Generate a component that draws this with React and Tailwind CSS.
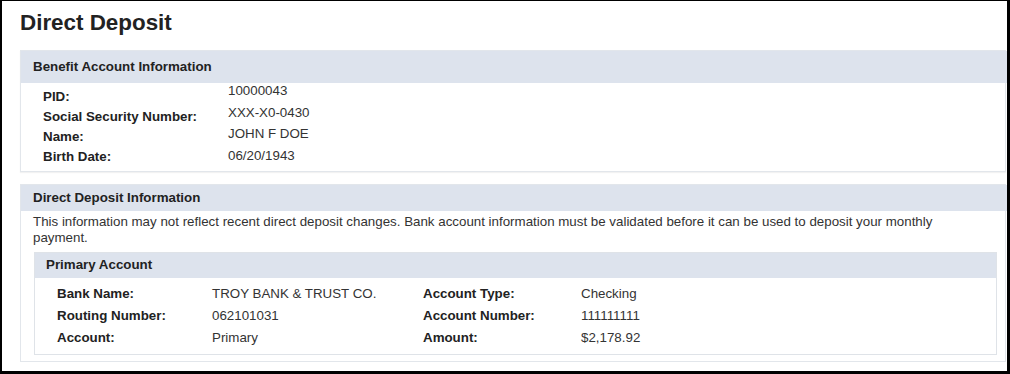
export default function App() {
  const benefit = [
    ['PID:', '10000043'],
    ['Social Security Number:', 'XXX-X0-0430'],
    ['Name:', 'JOHN F DOE'],
    ['Birth Date:', '06/20/1943'],
  ];
  const primary = [
    ['Bank Name:', 'TROY BANK & TRUST CO.', 'Account Type:', 'Checking'],
    ['Routing Number:', '062101031', 'Account Number:', '111111111'],
    ['Account:', 'Primary', 'Amount:', '$2,178.92'],
  ];

  return (
    <div
      className="w-[1010px] h-[374px] overflow-hidden bg-white border-l-2 border-t border-r-[3px] border-b-[3px] border-black text-[13.33px] text-[#333]"
      style={{ fontFamily: '"Liberation Sans", Arial, sans-serif' }}
    >
      <h1 className="pl-[18px] pt-[9px] h-[49px] text-[22.4px] leading-[26px] font-bold text-[#222]">Direct Deposit</h1>

      {/* Benefit Account Information */}
      <div className="ml-[18px] mr-[1px] border border-[#e2e6eb] shadow-[0_1px_1px_rgba(0,0,0,0.05)]">
        <div className="h-[32px] -mr-[3px] bg-[#dde3ed] pl-3 flex items-center font-bold text-[#222]">
          Benefit Account Information
        </div>
        <div className="flex pl-[22px]">
          <div className="w-[185px] flex flex-col pt-[4px] pb-[4px] leading-[20px] font-bold text-[#222]">
            {benefit.map(([label]) => (
              <span key={label}>{label}</span>
            ))}
          </div>
          <div className="flex flex-col gap-[5.7px] leading-[16px]">
            {benefit.map(([label, value]) => (
              <span key={label}>{value}</span>
            ))}
          </div>
        </div>
      </div>

      {/* Direct Deposit Information */}
      <div className="ml-[18px] mr-[1px] mt-[12px] border border-[#e2e6eb] pb-[6px]">
        <div className="h-[26px] -mr-[3px] bg-[#dde3ed] pl-3 flex items-center font-bold text-[#222]">
          Direct Deposit Information
        </div>
        <p className="pl-3 pr-4 pt-[3px] leading-[16px]">
          This information may not reflect recent direct deposit changes. Bank account information must be validated before it can be used to deposit your monthly payment.
        </p>

        {/* Primary Account */}
        <div className="ml-[13px] mr-[8px] mt-[6px] border border-[#dfe3e8]">
          <div className="h-[25px] bg-[#dde3ed] pl-[11px] flex items-center pb-[2px] font-bold text-[#222]">
            Primary Account
          </div>
          <div className="pl-[22px] pt-[5px] pb-[5px]">
            {primary.map(([l1, v1, l2, v2]) => (
              <div key={l1} className="flex h-[22px] items-center">
                <span className="w-[155px] font-bold text-[#222]">{l1}</span>
                <span className="w-[211px]">{v1}</span>
                <span className="w-[158px] font-bold text-[#222]">{l2}</span>
                <span>{v2}</span>
              </div>
            ))}
          </div>
        </div>
      </div>
    </div>
  );
}
